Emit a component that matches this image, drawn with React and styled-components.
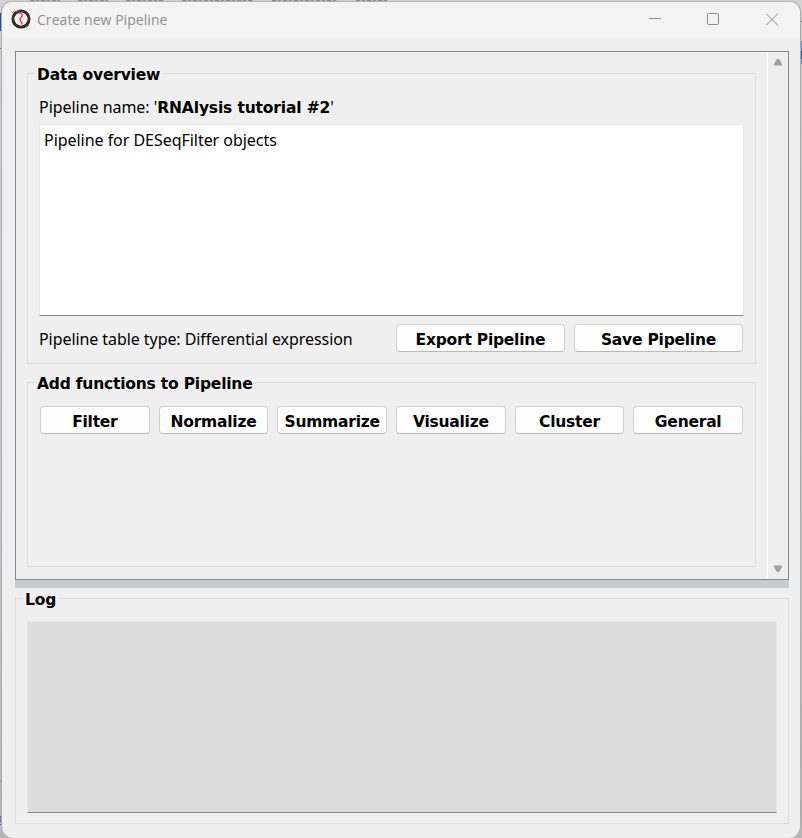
import React from "react";
import styled, { createGlobalStyle } from "styled-components";

const Global = createGlobalStyle`
  *{box-sizing:border-box}
  body{margin:0;overflow:hidden;background:#bdbdbd;color:#000;
    font:16px/20px "Noto Sans",sans-serif}
  b{font-family:"DejaVu Sans",sans-serif;font-size:15.5px}
`;
const Desktop = styled.div`
  position:relative;height:838px;width:802px;overflow:hidden;padding:1px 1px 0 1px;
  background:linear-gradient(#d2d2d2,#c6c6c6 60%,#b5b5b5);
`;
const Menu = styled.div`
  position:absolute;left:30px;top:0;height:1px;display:flex;gap:18px;
`;
const MenuMark = styled.span`
  height:1px;width:${p => p.$w}px;
  background:repeating-linear-gradient(90deg,#888 0 4px,#b8b8b8 4px 6px,#8d8d8d 6px 9px,#c0c0c0 9px 11px);
`;
const Sliver = styled.div`
  position:absolute;width:2px;${p => p.$right ? "right:0" : "left:0"};
  top:${p => p.$y}px;height:${p => p.$h}px;background:${p => p.$c};
`;
const Window = styled.main`
  position:relative;height:837px;border:1px solid #ababab;border-top-color:#b4b4b4;
  border-bottom:0;border-radius:11px 11px 12px 12px;background:#efefef;overflow:hidden;
`;
const TitleBar = styled.header`
  height:36px;background:#f3f3f3;display:flex;align-items:center;padding:0 21px 2px 9px;
`;
const Title = styled.h1`
  margin:2px auto 0 6px;font:400 14px/20px "Open Sans",sans-serif;color:#8e8e8e;
  letter-spacing:.05px;
`;
const Controls = styled.div`display:flex;gap:46px;`;
const Body = styled.div`padding:13px 11px 0 13px;`;
const Scroll = styled.section`
  height:529px;border:1px solid #828790;display:flex;
`;
const Content = styled.div`width:751px;padding:21px 11px 0;`;
const Bar = styled.div`
  flex:1;border-left:1px solid #fff;display:flex;flex-direction:column;
  justify-content:space-between;align-items:center;padding:6px 0 6px;
`;
const Group = styled.section`
  height:${p => p.$h}px;margin-bottom:${p => p.$mb || 0}px;
  border:1px solid #dcdcdc;padding:0 11px;
`;
const Legend = styled.h2`
  margin:-10px 0 0 -4px;width:max-content;height:20px;padding:1px 3px 0 2px;background:#efefef;
  font:700 15.5px/20px "DejaVu Sans",sans-serif;letter-spacing:-.2px;
`;
const Line = styled.div`
  letter-spacing:-.04px;white-space:nowrap;line-height:20px;
  b{letter-spacing:-.15px;line-height:1}
`;
const Name = styled(Line)`margin:13px 0 7px;height:20px;`;
const TableType = styled(Line)`padding-top:2px;letter-spacing:-.07px;`;
const Editor = styled.div`
  height:${p => p.$h}px;background:${p => p.$bg};border:1px solid #e8e8e8;
  border-bottom-color:#868686;padding:5px 4px;
`;
const LogView = styled(Editor)`margin-top:12px;`;
const Footer = styled.div`
  display:grid;grid-template-columns:348px 169px 169px;column-gap:9px;
  align-items:center;margin-top:8px;
`;
const ButtonRow = styled.div`
  display:grid;grid-template-columns:repeat(6,1fr);column-gap:9px;margin:13px 1px 0;
`;
const Button = styled.button`
  height:28px;min-width:0;padding:3px 0 0;border:1px solid #d0d0d0;border-bottom-color:#bababa;border-radius:4px;
  background:#fdfdfd;color:#000;font:700 15.5px/20px "DejaVu Sans",sans-serif;
  letter-spacing:-.23px;white-space:nowrap;
`;
const Splitter = styled.div`height:8px;background:#c8cccf;margin-bottom:10px;`;

const Logo = () => (
  <svg width="20" height="20" viewBox="0 0 20 20" fill="none">
    <circle cx="10" cy="10" r="8" stroke="#171717" strokeWidth="3" />
    <circle cx="10" cy="10" r="8" stroke="#777" strokeWidth=".5" />
    <path d="M1 4 4 1.5M15 18.5 18 16M5 2.5 8 1.2" stroke="#e04a55" strokeWidth="1" />
    <circle cx="10" cy="10" r="6.5" fill="#f6eeee" />
    <path d="M7.8 4.500C10.500 4 11.500 5 11 7c-.5 1.500-2.500 2-2 4 .4 1.500 2.500 2 2 4.500" stroke="#e44b58" strokeWidth="1.5" />
  </svg>
);
const Arrow = ({ down }) => (
  <svg width="10" height="8" viewBox="0 0 10 8">
    <path d={down ? "M1 1h8L6 6.500H4z" : "M1 7h8L6 1.500H4z"} fill="#a0a0a0" stroke="#a0a0a0" strokeLinejoin="round" />
  </svg>
);
const Glyph = ({ children }) => (
  <svg width="13" height="13" viewBox="0 0 13 13" fill="none" stroke="#8c8c8c">{children}</svg>
);

const MENU_WIDTHS = [30, 30, 38, 72, 66, 32];
const CATEGORIES = ["Filter", "Normalize", "Summarize", "Visualize", "Cluster", "General"];

export default function App() {
  return (
    <Desktop>
      <Global />
      <Menu>{MENU_WIDTHS.map((w, i) => <MenuMark key={i} $w={w} />)}</Menu>
      <Sliver $y={13} $h={18} $c="#1d4fa5" />
      <Sliver $y={48} $h={1} $c="#777" />
      <Sliver $y={781} $h={1} $c="#888" />
      <Sliver $y={816} $h={2} $c="#3f5fc0" />
      <Sliver $y={819} $h={3} $c="#5b78c8" />
      <Sliver $y={824} $h={1} $c="#3f5fc0" />
      <Sliver $right $y={21} $h={1} $c="#333" />
      <Sliver $right $y={41} $h={10} $c="#6f90c5" />
      <Sliver $right $y={51} $h={8} $c="#284f8c" />
      <Sliver $right $y={59} $h={5} $c="#6f90c5" />
      <Window>
        <TitleBar>
          <Logo />
          <Title>Create new Pipeline</Title>
          <Controls>
            <Glyph><path d="M1 5.500h12" /></Glyph>
            <Glyph><rect x=".5" y=".5" width="11" height="11" rx="1" /></Glyph>
            <Glyph><path d="M0 .5l12 12M12 .5l-12 12" /></Glyph>
          </Controls>
        </TitleBar>
        <Body>
          <Scroll>
            <Content>
              <Group $h={291} $mb={18}>
                <Legend>Data overview</Legend>
                <Name>Pipeline name: '<b>RNAlysis tutorial #2</b>'</Name>
                <Editor $h={192} $bg="#fff"><Line>Pipeline for DESeqFilter objects</Line></Editor>
                <Footer>
                  <TableType>Pipeline table type: Differential expression</TableType>
                  <Button>Export Pipeline</Button>
                  <Button>Save Pipeline</Button>
                </Footer>
              </Group>
              <Group $h={185}>
                <Legend>Add functions to Pipeline</Legend>
                <ButtonRow>{CATEGORIES.map(c => <Button key={c}>{c}</Button>)}</ButtonRow>
              </Group>
            </Content>
            <Bar><Arrow /><Arrow down /></Bar>
          </Scroll>
          <Splitter />
          <Group $h={226}>
            <Legend>Log</Legend>
            <LogView $h={192} $bg="#ddd" />
          </Group>
        </Body>
      </Window>
    </Desktop>
  );
}
